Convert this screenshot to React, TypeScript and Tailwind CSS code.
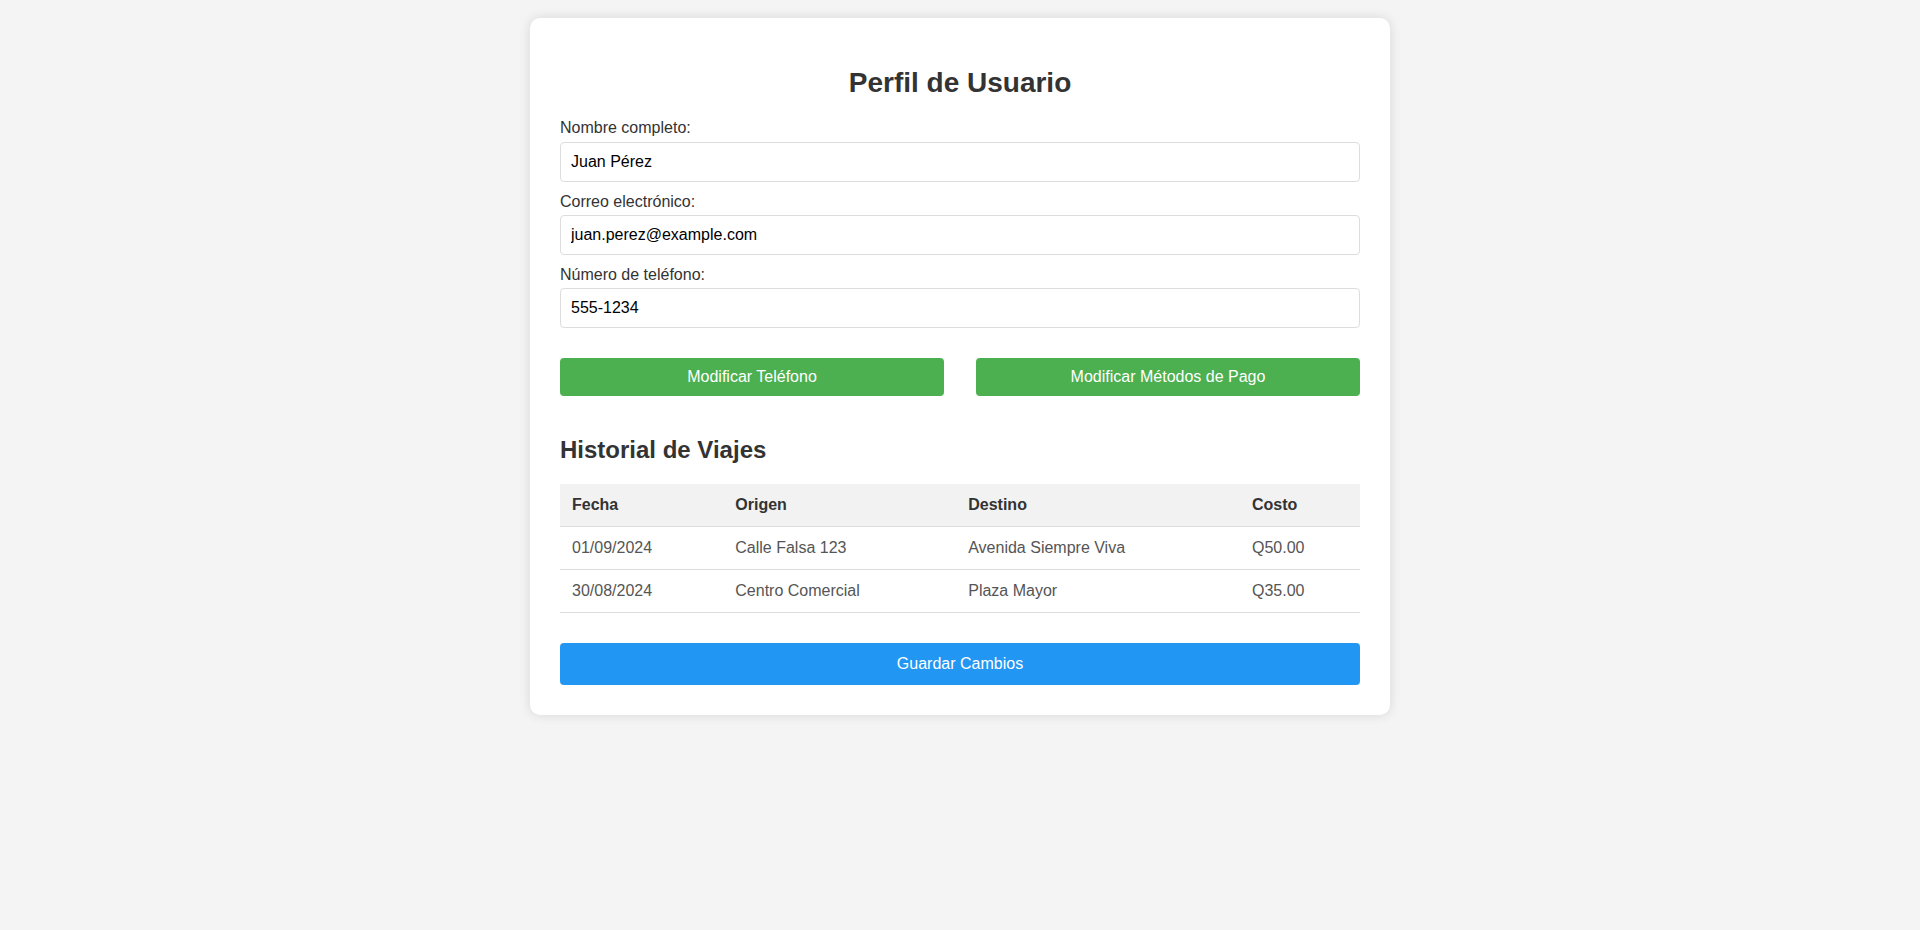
import React from "react";

const fields = [
  { label: "Nombre completo:", value: "Juan Pérez", type: "text" },
  { label: "Correo electrónico:", value: "juan.perez@example.com", type: "email" },
  { label: "Número de teléfono:", value: "555-1234", type: "tel" },
];

const trips = [
  { fecha: "01/09/2024", origen: "Calle Falsa 123", destino: "Avenida Siempre Viva", costo: "Q50.00" },
  { fecha: "30/08/2024", origen: "Centro Comercial", destino: "Plaza Mayor", costo: "Q35.00" },
];

export default function App() {
  return (
    <div
      className="min-h-[930px] w-full bg-[#f4f4f4] pt-[18px]"
      style={{ fontFamily: '"Liberation Sans", Arial, sans-serif' }}
    >
      <div className="mx-auto flex w-[860px] flex-col rounded-[10px] bg-white p-[30px] shadow-[0_0_12px_rgba(0,0,0,0.12)]">
        <h1 className="mt-[19px] mb-[19px] text-center text-[28px] font-bold leading-[1.15] text-[#333]">
          Perfil de Usuario
        </h1>

        {fields.map((f) => (
          <div key={f.label} className="flex flex-col">
            <label className="mb-[5px] block pt-[1px] text-[16px] leading-[1.15] text-[#333]">{f.label}</label>
            <input
              type={f.type}
              defaultValue={f.value}
              className="mb-[10px] -mt-[1px] box-border h-[40px] w-full rounded-[4px] border border-[#ddd] bg-white px-[10px] text-[16px] leading-[1.15] text-black outline-none"
            />
          </div>
        ))}

        <div className="mt-[20px] flex justify-between">
          <button className="h-[38px] w-[48%] rounded-[4px] bg-[#4CAF50] text-[16px] leading-[1.15] text-white">
            Modificar Teléfono
          </button>
          <button className="h-[38px] w-[48%] rounded-[4px] bg-[#4CAF50] text-[16px] leading-[1.15] text-white">
            Modificar Métodos de Pago
          </button>
        </div>

        <h2 className="mt-[40px] mb-[20px] text-[24px] font-bold leading-[1.15] text-[#333]">
          Historial de Viajes
        </h2>

        <table className="w-full border-collapse text-[16px] leading-[18px]">
          <thead>
            <tr>
              {["Fecha", "Origen", "Destino", "Costo"].map((h) => (
                <th
                  key={h}
                  className="border-b border-[#ddd] bg-[#f2f2f2] p-[12px] text-left font-bold text-[#333]"
                >
                  {h}
                </th>
              ))}
            </tr>
          </thead>
          <tbody>
            {trips.map((t) => (
              <tr key={t.fecha}>
                <td className="border-b border-[#ddd] p-[12px] text-left text-[#555]">{t.fecha}</td>
                <td className="border-b border-[#ddd] p-[12px] text-left text-[#555]">{t.origen}</td>
                <td className="border-b border-[#ddd] p-[12px] text-left text-[#555]">{t.destino}</td>
                <td className="border-b border-[#ddd] p-[12px] text-left text-[#555]">{t.costo}</td>
              </tr>
            ))}
          </tbody>
        </table>

        <button className="mt-[30px] h-[42px] w-full rounded-[4px] bg-[#2196F3] text-[16px] leading-[1.15] text-white">
          Guardar Cambios
        </button>
      </div>
    </div>
  );
}
